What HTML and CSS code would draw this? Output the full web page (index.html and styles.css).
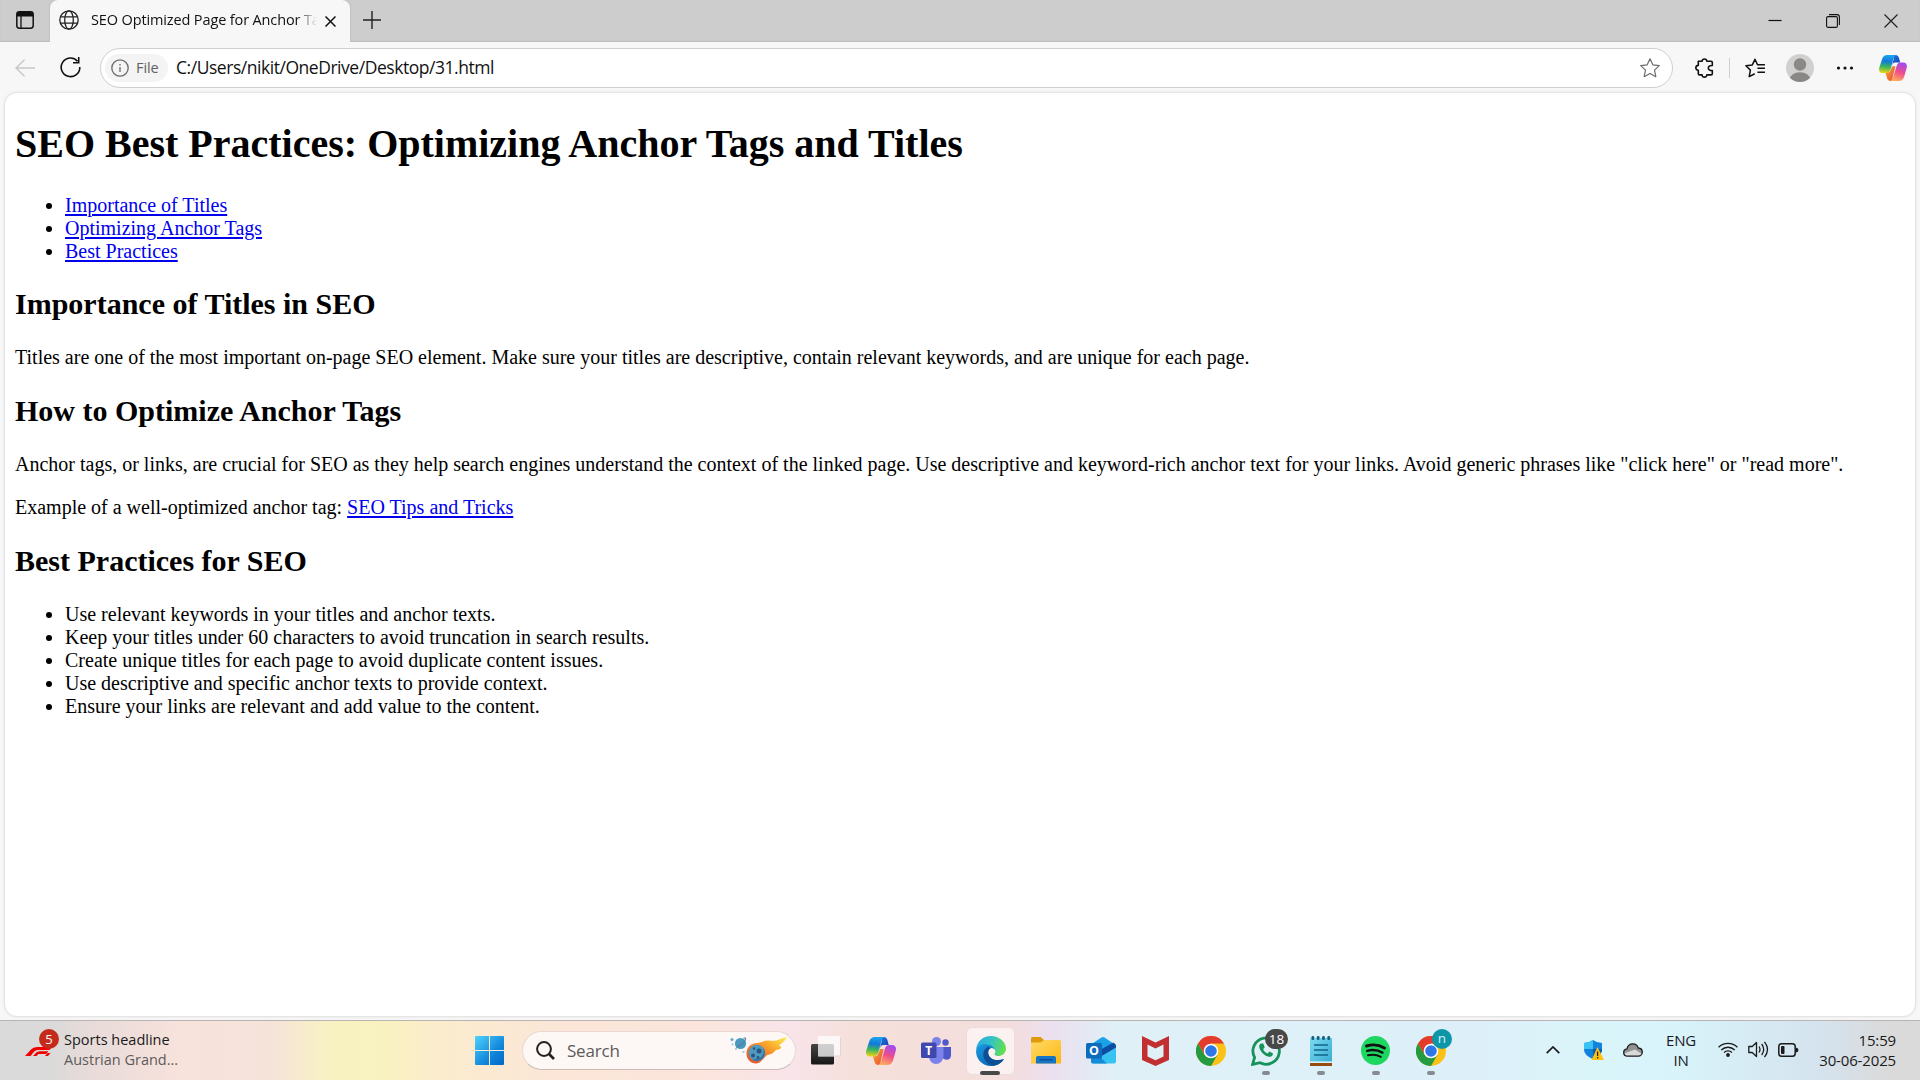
FILE: index.html
```html
<!DOCTYPE html>
<html lang="en">
<head>
<meta charset="utf-8">
<title>SEO Optimized Page for Anchor Tags and Titles</title>
<link rel="stylesheet" href="styles.css">
</head>
<body>
<svg class="defs" aria-hidden="true">
  <defs>
    <linearGradient id="cpA" x1=".4" y1="0" x2="0.3" y2="1"><stop offset="0" stop-color="#18a5ee"/><stop offset=".35" stop-color="#1478d8"/><stop offset=".65" stop-color="#3bb85c"/><stop offset="1" stop-color="#f6d313"/></linearGradient>
    <linearGradient id="cpB" x1=".6" y1="0" x2=".3" y2="1"><stop offset="0" stop-color="#a24bf0"/><stop offset=".5" stop-color="#ee4d8b"/><stop offset="1" stop-color="#ffb05a"/></linearGradient>
    <linearGradient id="cpC" x1="0" y1="0" x2="1" y2="1"><stop offset="0" stop-color="#1a86e8"/><stop offset="1" stop-color="#1935b0"/></linearGradient>
    <linearGradient id="cpD" x1="0" y1="0" x2="1" y2="1"><stop offset="0" stop-color="#f8a13a"/><stop offset="1" stop-color="#e8502f"/></linearGradient>
    <linearGradient id="win" gradientUnits="userSpaceOnUse" x1="0" y1="0" x2="29" y2="29"><stop offset="0" stop-color="#4fd3fc"/><stop offset=".6" stop-color="#1288dc"/><stop offset="1" stop-color="#0067c5"/></linearGradient>
    <linearGradient id="edgeTop" x1="0" y1=".3" x2="1" y2=".5"><stop offset="0" stop-color="#2aa9e6"/><stop offset=".5" stop-color="#33c3c4"/><stop offset="1" stop-color="#66e04b"/></linearGradient>
    <linearGradient id="edgeLeft" x1="0" y1="0" x2="1" y2="1"><stop offset="0" stop-color="#1b9de2"/><stop offset="1" stop-color="#0a55a6"/></linearGradient>
    <linearGradient id="folder" x1="0" y1="0" x2="1" y2="1"><stop offset="0" stop-color="#ffda68"/><stop offset="1" stop-color="#fdb813"/></linearGradient>
    <linearGradient id="flame" x1="0" y1="1" x2="1" y2="0"><stop offset="0" stop-color="#ea4a2c"/><stop offset=".35" stop-color="#f3742b"/><stop offset=".6" stop-color="#f9a42c"/><stop offset="1" stop-color="#fff04a"/></linearGradient>
    <linearGradient id="note" x1="0" y1="0" x2="1" y2="1"><stop offset="0" stop-color="#7bdcf3"/><stop offset="1" stop-color="#36a9cf"/></linearGradient>
    <linearGradient id="dark" x1="0" y1="0" x2="0" y2="1"><stop offset="0" stop-color="#444"/><stop offset="1" stop-color="#171717"/></linearGradient>
    <symbol id="copilot" viewBox="0 0 30 28">
      <path fill="url(#cpC)" d="M11 0h6.500c2.500 0 3.500 1.500 4.200 4l1 4h-5.500c-1.500 0-2.500 1-3 2.500L13 14 15.500 5c.7-2.500 0-4.500-4.500-5z"/>
      <path fill="url(#cpA)" d="M9 0h9.500c-2 .8-2.800 3-3.500 5.500l-2.700 10c-.7 2.300-2 4-4.800 4H4c-3.200 0-4.700-2.500-3.700-6L3.200 4.500C4.200 1.500 6 0 9 0z"/>
      <path fill="url(#cpD)" d="M7 19.500h1c2.500 0 3.800-1.300 4.500-3.600l1.700-3.900h3.500L15 23c-.8 2.800-.5 4 1.500 5h-4c-2.500 0-3.500-1.300-4.200-4z"/>
      <path fill="url(#cpB)" d="M21 28H12c2.300-1 3-3 3.700-5.800l3.100-10.200c.7-2.500 2-4 4.700-4H26c3.200 0 4.700 2.500 3.700 6L27 23.500c-1 3-3 4.500-6 4.500z"/>
    </symbol>
    <symbol id="chrome" viewBox="0 0 30 30">
      <circle cx="15" cy="15" r="15" fill="#fbc116"/>
      <path fill="#e33b2e" d="M2 7.500A15 15 0 0 1 28 7.500H15L8.500 18.800z"/>
      <path fill="#249a41" d="M2 7.500A15 15 0 0 0 15 30l6.500-11.200L15 22l-6.500-3.200z"/>
      <circle cx="15" cy="15" r="7.300" fill="#fff"/><circle cx="15" cy="15" r="5.800" fill="#2f76e8"/>
    </symbol>
  </defs>
</svg>
<div class="browser">
  <header class="tabbar">
    <svg class="tab-actions" width="18" height="18" viewBox="0 0 18 18"><rect x=".8" y=".8" width="16.400" height="16.400" rx="2.600" fill="none" stroke="#111" stroke-width="1.500"/><path d="M1 5.500V3a2 2 0 0 1 2-2h12a2 2 0 0 1 2 2v2.500z" fill="#111"/><path d="M5 5v12" stroke="#111" stroke-width="1.300"/></svg>
    <div class="tab">
      <svg width="20" height="20" viewBox="0 0 20 20" fill="none" stroke="#222" stroke-width="1.300"><circle cx="10" cy="10" r="9.200"/><ellipse cx="10" cy="10" rx="4.300" ry="9.200"/><path d="M1.700 6.800h16.600M1.700 13.200h16.600"/></svg>
      <span class="tab-title">SEO Optimized Page for Anchor Ta</span>
      <svg class="tab-close" width="11" height="11" viewBox="0 0 11 11" stroke="#111" stroke-width="1.500"><path d="M.5.500l10 10M10.500.500l-10 10"/></svg>
    </div>
    <svg class="new-tab" width="18" height="18" viewBox="0 0 18 18" stroke="#222" stroke-width="1.400"><path d="M9 0v18M0 9h18"/></svg>
    <div class="window-controls">
      <svg width="14" height="14" viewBox="0 0 14 14"><path d="M.5 6.500h13" stroke="#111" stroke-width="1.200"/></svg>
      <svg width="14" height="14" viewBox="0 0 14 14" fill="none" stroke="#111" stroke-width="1.100"><rect x=".6" y="2.600" width="10.800" height="10.800" rx="1.500"/><path d="M3 .6h8a2.400 2.400 0 0 1 2.400 2.400v8"/></svg>
      <svg width="14" height="14" viewBox="0 0 14 14" stroke="#222" stroke-width="1.200"><path d="M.5.500l13 13M13.500.500l-13 13"/></svg>
    </div>
  </header>
  <nav class="toolbar">
    <svg class="back" width="20" height="18" viewBox="0 0 20 18" fill="none" stroke="#c7c7c7" stroke-width="1.400"><path d="M20 9H1M9.500.7L1 9l8.500 8.300"/></svg>
    <svg class="reload" width="21" height="21" viewBox="0 0 21 21" fill="none" stroke="#111" stroke-width="1.600"><path d="M17.500 4.200A9.300 9.300 0 1 0 19.800 10M18.700 0v5.700H13"/></svg>
    <div class="address">
      <span class="chip"><svg width="18" height="18" viewBox="0 0 18 18" fill="none" stroke="#6a6a6a" stroke-width="1.300"><circle cx="9" cy="9" r="8.200"/><path d="M9 8v5M9 5v1.500"/></svg><span>File</span></span>
      <span class="url">C:/Users/nikit/OneDrive/Desktop/31.html</span>
      <svg class="fav" width="20" height="20" viewBox="0 0 20 20" fill="none" stroke="#6c6c6c" stroke-width="1.200" stroke-linejoin="round"><path d="M10 .8l2.800 6 6.500.8-4.800 4.500 1.300 6.600L10 15.500l-5.800 3.200 1.300-6.600L.7 7.600l6.500-.8z"/></svg>
    </div>
    <svg class="ext" width="19" height="20" viewBox="0 0 19 20" fill="none" stroke="#111" stroke-width="1.600" stroke-linejoin="round"><path d="M3.300 3.200h3.800c-.3-3 5-3 4.700 0h4.300q1.200 0 1.200 1.200v3.100c-5.300-.4-5.300 5.400 0 5v3.200q0 1.200-1.200 1.200h-4.300c.3 3-5 3-4.700 0H4.500q-1.200 0-1.200-1.200v-3.400c-3.300-.3-3.300-4.600 0-4.900z"/></svg>
    <i class="sep"></i>
    <svg class="favs" width="20" height="20" viewBox="0 0 20 20" fill="none" stroke="#111" stroke-width="1.500" stroke-linejoin="round" stroke-linecap="round"><path d="M12.500 6.800L10 1.300 7.300 6.900.9 7.700l4.500 4.400-1.200 6.500L9.300 16M13 10.200h6.500M13 14.200h6.500M12.500 6.800h7"/></svg>
    <svg class="avatar" width="28" height="28" viewBox="0 0 28 28"><defs><clipPath id="av"><circle cx="14" cy="14" r="14"/></clipPath></defs><circle cx="14" cy="14" r="14" fill="#d2d0ce"/><g fill="#8a8886" clip-path="url(#av)"><circle cx="14" cy="10.500" r="6.200"/><ellipse cx="14" cy="26" rx="10.500" ry="7.800"/></g></svg>
    <svg class="more" width="18" height="4" viewBox="0 0 18 4" fill="#111"><circle cx="2.500" cy="2" r="1.600"/><circle cx="9" cy="2" r="1.600"/><circle cx="15.500" cy="2" r="1.600"/></svg>
    <svg class="cp-side" width="28" height="26"><use href="#copilot" width="28" height="26"/></svg>
  </nav>
  <main class="page">
    <h1>SEO Best Practices: Optimizing Anchor Tags and Titles</h1>
    <ul>
      <li><a href="#titles">Importance of Titles</a></li>
      <li><a href="#anchors">Optimizing Anchor Tags</a></li>
      <li><a href="#best">Best Practices</a></li>
    </ul>
    <h2 id="titles">Importance of Titles in SEO</h2>
    <p>Titles are one of the most important on-page SEO element. Make sure your titles are descriptive, contain relevant keywords, and are unique for each page.</p>
    <h2 id="anchors">How to Optimize Anchor Tags</h2>
    <p>Anchor tags, or links, are crucial for SEO as they help search engines understand the context of the linked page. Use descriptive and keyword-rich anchor text for your links. Avoid generic phrases like "click here" or "read more".</p>
    <p>Example of a well-optimized anchor tag: <a href="#tips">SEO Tips and Tricks</a></p>
    <h2 id="best">Best Practices for SEO</h2>
    <ul>
      <li>Use relevant keywords in your titles and anchor texts.</li>
      <li>Keep your titles under 60 characters to avoid truncation in search results.</li>
      <li>Create unique titles for each page to avoid duplicate content issues.</li>
      <li>Use descriptive and specific anchor texts to provide context.</li>
      <li>Ensure your links are relevant and add value to the content.</li>
    </ul>
  </main>
</div>
<footer class="taskbar">
  <div class="widget">
    <div class="widget-icon">
      <svg width="27" height="9" viewBox="0 0 27 9" fill="#f00000"><path d="M0 9L6 2.500Q8 0 12 0h15l-2.500 3H13q-2.500 0-4 1.700L5.500 9z"/><path d="M8 9l3-3.300Q12.300 4.200 14.500 4.200h9L21 7h-7.500l-2 2zM22.500 6h3L23 9h-3z"/></svg>
      <span class="count">5</span>
    </div>
    <div class="widget-text"><b>Sports headline</b><span>Austrian Grand...</span></div>
  </div>
  <svg class="start" width="29" height="29" viewBox="0 0 29 29" fill="url(#win)"><path d="M1 0h13v14H0V1a1 1 0 0 1 1-1zM15 0h13a1 1 0 0 1 1 1v13H15zM0 15h14v14H1a1 1 0 0 1-1-1zM15 15h14v13a1 1 0 0 1-1 1H15z"/></svg>
  <div class="search">
    <svg width="19" height="19" viewBox="0 0 19 19" fill="none" stroke="#222" stroke-width="2"><circle cx="8" cy="8" r="6.900"/><path d="M13 13l5 5" stroke-width="2.600"/></svg>
    <span>Search</span>
    <svg class="comet" width="57" height="27" viewBox="0 0 57 27"><circle cx="2" cy="2.500" r="1.500" fill="#58a9d6"/><circle cx="2.500" cy="7.500" r="1" fill="#8cc6e2"/><circle cx="13.500" cy="15" r="1.100" fill="#8cc6e2"/><circle cx="6" cy="12" r="1" fill="#8cc6e2"/><circle cx="10.500" cy="6.500" r="5.600" fill="#4a98c0"/><path d="M6.500 10.500C9 9.500 12.500 7 15 3.500 16.500 1 15.500.5 13.500 1.300" fill="none" stroke="#557fa0" stroke-width="1.100"/><path fill="url(#flame)" d="M16.500 16.500C16.500 10 21 6.500 27 6c4-.3 6-2 10-2.500 4-.3 8 1 11-.5 3-1.500 6-2 9-3-2 4.500-5.500 6-8 8.500 2.500.5 3 2.500 0 4-2-.5-4 1-5 2.500-2.500 2.500-5 2-7.500 3.500C33 21.500 31 26.500 26 26.500c-5.500 0-9.500-4.500-9.500-10z"/><circle cx="26.800" cy="16" r="8.200" fill="#4f9bc0"/><path d="M22 22.500a8.200 8.200 0 0 0 11-12c2 5-1 10.500-5.500 11-2 .3-3.500 1-5.500 1z" fill="#3575a5"/><g fill="#28567f"><circle cx="29" cy="14" r="2.500"/><circle cx="23" cy="18.500" r="2"/><circle cx="24" cy="11.500" r="1.200"/><circle cx="28" cy="20.500" r="1.400"/></g></svg>
  </div>
  <div class="apps">
    <div class="app"><svg width="30" height="29" viewBox="0 0 30 29"><rect y="8" width="23" height="20.500" rx="1.500" fill="url(#dark)"/><rect x="7" y="0" width="23" height="20.500" rx="1.500" fill="#fff" fill-opacity=".75"/><path d="M7 20h23M29.500 1v19" stroke="#ccc" opacity=".7"/></svg></div>
    <div class="app"><svg width="30" height="28"><use href="#copilot" width="30" height="28"/></svg></div>
    <div class="app"><svg width="30" height="27" viewBox="0 0 30 27"><circle cx="15.500" cy="4.500" r="4.500" fill="#7b83eb"/><circle cx="24.500" cy="5.500" r="3.200" fill="#5059c9"/><path d="M21 10h9v8c0 6-7 6-9 2z" fill="#5059c9"/><path d="M8 10h14.500v8c0 5-3 9-7.500 9s-7-4-7-8z" fill="#7b83eb"/><rect y="5.500" width="15.500" height="15.500" rx="1.500" fill="#4048ae"/><text x="7.700" y="17.500" class="glyph" font-size="12">T</text></svg></div>
    <div class="app active"><svg width="30" height="30" viewBox="0 0 30 30"><path fill="url(#edgeLeft)" d="M0 15C1 8 7 6 12 7c5 1 7 4 7 7-2-2-6-1-6.500 3-.5 5 5 9 15 6.500C25 27.500 20 30 15 30 6 30 0 23 0 15z"/><path fill="#0c4f94" d="M12.500 10.500C7 13 6 19 9 24c2 3.500 5 5.500 8 5.800 5-.3 9-3.300 11-6.800-9 3-15.500-.5-15.500-6 0-2 1-3 2-4z"/><path fill="url(#edgeTop)" d="M0 14C1 5 7 0 15 0s15 6 15 12.500c0 5-4 7.500-8 7.500-3 0-4.500-1.500-3.500-2.500C20 16 19.500 13 17 11 12 7 3 7 0 14z"/><path fill="#faf1f0" d="M19 14.500c-.8-1.700-2.300-2.700-4-2.300-2.300.6-3 3-2.500 5.300 1 4 6 6.500 11.500 5.500l-2-3c-3 0-4.500-1.500-3.500-2.500.6-.8.900-1.800.5-3z"/></svg></div>
    <div class="app"><svg width="30" height="27" viewBox="0 0 30 27"><path d="M0 8V1.500A1.500 1.500 0 0 1 1.500 0h8L13 3v5z" fill="#dd9a0b"/><path d="M0 5.500h9.500L13 3h15.500A1.500 1.500 0 0 1 30 4.500V26.500H0z" fill="url(#folder)"/><path d="M5 26.500V21a2 2 0 0 1 2-2h16a2 2 0 0 1 2 2v5.500z" fill="#1575c8"/><path d="M8.500 22.700h13" stroke="#0a4f97" stroke-width="1.400"/></svg></div>
    <div class="app"><svg width="30" height="27" viewBox="0 0 30 27"><path d="M4 8L15.500.6q1.500-1 3 0L28 7l-12 9-8-2z" fill="#1ba1e8"/><path d="M13 13.500L27.500 5.500 30 8v3.500L17 19l-4-1z" fill="#0b4da2"/><path d="M30 10.500v14a2 2 0 0 1-2 2H7a2 2 0 0 1-2-2V20h9z" fill="#37c2f1"/><path d="M5 20h9l7 6.500H7a2 2 0 0 1-2-2z" fill="#168bd8"/><rect y="6" width="16" height="15.500" rx="1.500" fill="#0f6cbd"/><text x="8" y="18" class="glyph" font-size="12.500">O</text></svg></div>
    <div class="app"><svg width="27" height="30" viewBox="0 0 27 30"><path d="M0 0l13.500 6.500L27 0v24l-13.500 6L0 24zM5.500 8.500V20.500l8 3.700 8-3.700V8.500l-8 4z" fill="#c22f31" fill-rule="evenodd"/></svg></div>
    <div class="app"><svg width="30" height="30"><use href="#chrome" width="30" height="30"/></svg></div>
    <div class="app running"><svg width="30" height="30" viewBox="0 0 30 30"><path d="M1.600 28.400l2-7A13.200 13.200 0 1 1 9 26.700z" fill="none" stroke="#17935a" stroke-width="2.800"/><path d="M10 7.500c-2 1-2.300 3.500-1 6 2 4 5 6.500 9 7.300 2 .4 4-1 4-3.300l-3.500-2-2 2c-2-.8-3.500-2.300-4.300-4.300l1.500-2L12.300 7.500z" fill="#17935a"/></svg><span class="badge">18</span></div>
    <div class="app running"><svg width="22" height="30" viewBox="0 0 22 30"><rect y="2" width="22" height="26" rx="1" fill="url(#note)"/><path d="M4 9h14M4 14h14M4 19h14" stroke="#11658c" stroke-width="1.700"/><path d="M0 27h22v3H0z" fill="#964b13"/><path d="M0 25.500h22v1.300H0z" fill="#fff"/><g fill="#155f80"><rect x="1.500" width="2.700" height="4" rx="1.200"/><rect x="6.800" width="2.700" height="4" rx="1.200"/><rect x="12.100" width="2.700" height="4" rx="1.200"/><rect x="17.400" width="2.700" height="4" rx="1.200"/></g></svg></div>
    <div class="app running"><svg width="29" height="29" viewBox="0 0 29 29"><circle cx="14.500" cy="14.500" r="14.500" fill="#1ed760"/><g fill="none" stroke="#111" stroke-linecap="round"><path d="M5.500 10q9.500-3 18 2" stroke-width="2.900"/><path d="M6.200 14.800q8-2.300 15.300 1.800" stroke-width="2.400"/><path d="M7 19.300q7-1.800 12.800 1.500" stroke-width="2"/></g></svg></div>
    <div class="app running"><svg width="30" height="30"><use href="#chrome" width="30" height="30"/></svg><span class="badge teal">n</span></div>
  </div>
  <div class="tray">
    <svg class="chev" width="14" height="8" viewBox="0 0 14 8" fill="none" stroke="#1a1a1a" stroke-width="1.700"><path d="M.7 7.200L7 1l6.300 6.200"/></svg>
    <svg class="shield" width="20" height="20" viewBox="0 0 20 20"><path d="M0 3q5 0 9-3 4 3 9 3v6c0 5-4 8-9 10C4 17 0 14 0 9z" fill="#1183dc"/><path d="M0 3q5 0 9-3v9H0z" fill="#3ac4f5"/><path d="M9 9h9c0 5-4 8-9 10z" fill="#0b5cad"/><path d="M13.500 7L20 20H7.500z" fill="#ffc20e"/><path d="M13.600 11.500v4.500M13.600 17v1.500" stroke="#222" stroke-width="1.300"/></svg>
    <svg class="cloud" width="20" height="14" viewBox="0 0 20 14"><path d="M4.500 13.200C2 13.200.7 11.500.7 9.500S2.200 6 4 5.800C4.700 2.500 7 .8 9.800.8c3 0 4.800 1.700 5.400 4.200 2.500.2 4.100 1.900 4.100 4s-1.600 4.200-4.100 4.200z" fill="#929292"/><path d="M1 10.500L12 6.500l7 4.500q-1.300 2.200-4 2.200H4.500Q2 13 1 10.500z" fill="#d9d9d9"/><path d="M4.500 13.200C2 13.200.7 11.500.7 9.500S2.200 6 4 5.800C4.700 2.500 7 .8 9.800.8c3 0 4.800 1.700 5.400 4.200 2.500.2 4.100 1.900 4.100 4s-1.600 4.200-4.100 4.200z" fill="none" stroke="#1d1d1d" stroke-width="1.300"/></svg>
    <div class="lang">ENG<br>IN</div>
    <svg class="wifi" width="20" height="15" viewBox="0 0 20 15" fill="none" stroke="#1a1a1a" stroke-width="1.400"><path d="M.6 5.300a13.300 13.300 0 0 1 18.800 0M3.300 8a9.500 9.500 0 0 1 13.400 0M6 10.500a5.700 5.700 0 0 1 8 0"/><circle cx="10" cy="13" r="1.900" fill="#1a1a1a" stroke="none"/></svg>
    <svg class="sound" width="21" height="17" viewBox="0 0 21 17" fill="none" stroke="#1a1a1a" stroke-width="1.300" stroke-linejoin="round"><path d="M.8 5.500h3.400L8.500 1.500v14L4.200 11.500H.8zM11 5.500q2 3 0 6M13.700 3q4 5.500 0 11M16.500.8q6 7.700 0 15.400"/></svg>
    <svg class="battery" width="21" height="14" viewBox="0 0 21 14"><rect x=".8" y=".8" width="16.400" height="12.400" rx="2.800" fill="none" stroke="#1a1a1a" stroke-width="1.500"/><rect x="3" y="3" width="3.500" height="8" rx="1" fill="#1a1a1a"/><path d="M18 4.500q2.500.5 2.500 2.500T18 9.500z" fill="#1a1a1a"/></svg>
    <div class="clock">15:59<br>30-06-2025</div>
  </div>
</footer>
</body>
</html>
```
FILE: styles.css
```css
* { box-sizing: border-box; }
html, body { height: 100%; }
body {
  margin: 0;
  display: flex;
  flex-direction: column;
  overflow: hidden;
  background: #f7f7f7;
  font-family: "Open Sans", "Noto Sans", sans-serif;
  color: #1a1a1a;
}
svg { display: block; flex: none; }
.defs { position: absolute; width: 0; height: 0; }
.browser { height: 1020px; display: flex; flex-direction: column; }

/* Tab strip */
.tabbar { height: 42px; display: flex; background: #cdcdcd; box-shadow: inset 0 -1px 1px #bdbdbd; }
.tab-actions { margin: 11px 17px 0 16px; }
.tab {
  width: 300px;
  margin-left: -1px;
  padding: 0 14px 3px 9px;
  display: flex;
  align-items: center;
  background: #f7f7f7;
  border-radius: 8px 8px 0 0;
  box-shadow: 0 0 2px #aaa;
  clip-path: inset(0 -3px 0 -3px);
}
.tab-title {
  width: 232px;
  margin: 0 -7px 0 12px;
  white-space: nowrap;
  font-size: 14.5px;
  letter-spacing: -0.13px;
  color: #111;
  -webkit-mask-image: linear-gradient(90deg, #000 205px, transparent 226px);
  mask-image: linear-gradient(90deg, #000 205px, transparent 226px);
}
.tab-close { margin: 3px 0 0 auto; }
.new-tab { margin: 11px 0 0 13px; }
.window-controls { margin: 14px 22px 0 auto; display: flex; gap: 44px; }

/* Toolbar */
.toolbar { height: 51px; display: flex; align-items: center; padding: 0 13px 0 15px; }
.reload { margin-left: 25px; }
.address {
  width: 1573px;
  height: 40px;
  margin: 0 0 0 19px;
  padding: 0 12px 0 4px;
  display: flex;
  align-items: center;
  background: #fff;
  border: 1px solid #cfcfcf;
  border-radius: 20px;
}
.chip {
  width: 63px;
  height: 28px;
  padding-left: 6px;
  display: flex;
  align-items: center;
  gap: 7px;
  border-radius: 14px;
  background: #f4f4f4;
  color: #616161;
  font-size: 14.5px;
  font-weight: 500;
  letter-spacing: -0.1px;
}
.chip span, .url { padding-bottom: 1px; }
.url { margin-left: 8px; font-size: 17.5px; letter-spacing: -0.46px; color: #111; }
.fav { margin-left: auto; }
.ext { margin-left: 22px; }
.sep { width: 1px; height: 20px; margin-left: 15px; background: #cfcfcf; }
.favs { margin-left: 15px; }
.avatar { margin-left: 21px; }
.more { margin-left: 22px; }
.cp-side { margin-left: auto; }

/* Document */
.page {
  width: 1910px;
  height: 923px;
  margin-left: 5px;
  padding: 0 10px;
  overflow: hidden;
  background: #fff;
  border-radius: 12px;
  box-shadow: 0 0 3px #c4c4c4;
  font: 20px/23px "Liberation Serif", "Times New Roman", serif;
  color: #000;
}
.page h1 { margin: 28px 0 27px; font-size: 40px; line-height: 46px; }
.page h2 { margin: 25px 0; font-size: 30px; line-height: 34px; }
.page ul { margin: 20px 0; padding-left: 50px; }
.page h1 + ul { margin-top: 27px; }
.page h1 + ul + h2 { margin-top: 24px; }
.page p { margin: 20px 0; }
.page a { color: #0000ee; text-decoration-thickness: 2px; text-underline-offset: 2px; }

/* Taskbar */
.taskbar {
  height: 60px;
  display: flex;
  align-items: center;
  border-top: 1px solid #b9b3b3;
  background: linear-gradient(90deg, #dadada 0, #dadada 50px, #e8dbd9 90px, #f8e2dc 180px, #f5e3da 270px, #f8f2c2 330px, #f9f2c0 385px, #fbeccd 440px, #fbe6d8 560px, #fbe5dc 700px, #f8e4ea 790px, #f5e0da 860px, #f3dedd 1010px, #ecdfee 1050px, #dff0f7 1115px, #ddf0f9 1480px, #daf5fa 1600px, #d8f3fa 1680px, #d5e3ee 1820px, #dadada 1890px);
}
.widget { width: 475px; display: flex; padding: 0 0 2px 25px; }
.widget-icon { position: relative; width: 39px; padding-top: 17px; }
.count {
  position: absolute;
  left: 14px;
  top: -1px;
  width: 20px;
  height: 20px;
  border-radius: 50%;
  background: #c42b1c;
  color: #fff;
  font-size: 13px;
  line-height: 20px;
  text-align: center;
}
.widget-text { display: flex; flex-direction: column; font-size: 14.5px; line-height: 20px; letter-spacing: 0; }
.widget-text b { font-weight: 400; }
.widget-text span { color: #5d5a59; }
.search {
  width: 274px;
  height: 39px;
  margin-left: 18px;
  padding: 0 8px 0 13px;
  display: flex;
  align-items: center;
  border-radius: 20px;
  background: #fdf8f6;
  border: 1px solid #ead8d2;
  border-bottom-color: #cdbbb6;
  font-size: 17px;
  letter-spacing: -0.2px;
  color: #5c5a5a;
}
.search span { margin-left: 12px; }
.comet { margin-left: auto; }
.apps { display: flex; margin-left: 2px; }
.app { position: relative; width: 55px; height: 48px; display: flex; align-items: center; justify-content: center; }
.active::before {
  content: "";
  position: absolute;
  inset: 0 3px;
  border-radius: 6px;
  background: #faf1f0;
  border: 1px solid #ecdcdc;
}
.active svg { position: relative; }
.active::after, .running::after {
  content: "";
  position: absolute;
  left: 24px;
  bottom: 0;
  width: 8px;
  height: 4px;
  border-radius: 2px;
  background: #858b90;
}
.active::after { left: 17px; width: 20px; background: #484848; }
.badge {
  position: absolute;
  left: 27px;
  top: 2px;
  width: 23px;
  height: 20px;
  border-radius: 10px;
  background: #484848;
  color: #fff;
  font-size: 13.5px;
  line-height: 20px;
  text-align: center;
}
.teal { left: 29px; width: 20px; background: #0d95a8; color: #d5f2f5; line-height: 18px; }
.glyph { fill: #fff; font-family: "Open Sans", sans-serif; font-weight: 700; text-anchor: middle; }
.tray { flex: 1; display: flex; align-items: center; padding: 0 24px 2px 0; font-size: 15px; line-height: 20px; letter-spacing: -0.15px; }
.chev { margin-left: auto; }
.shield { margin-left: 24px; }
.cloud { margin-left: 19px; }
.lang { width: 36px; margin-left: 20px; text-align: center; }
.wifi { margin-left: 19px; }
.sound { margin-left: 10px; }
.battery { margin-left: 9px; }
.clock { width: 97px; text-align: right; }
```
